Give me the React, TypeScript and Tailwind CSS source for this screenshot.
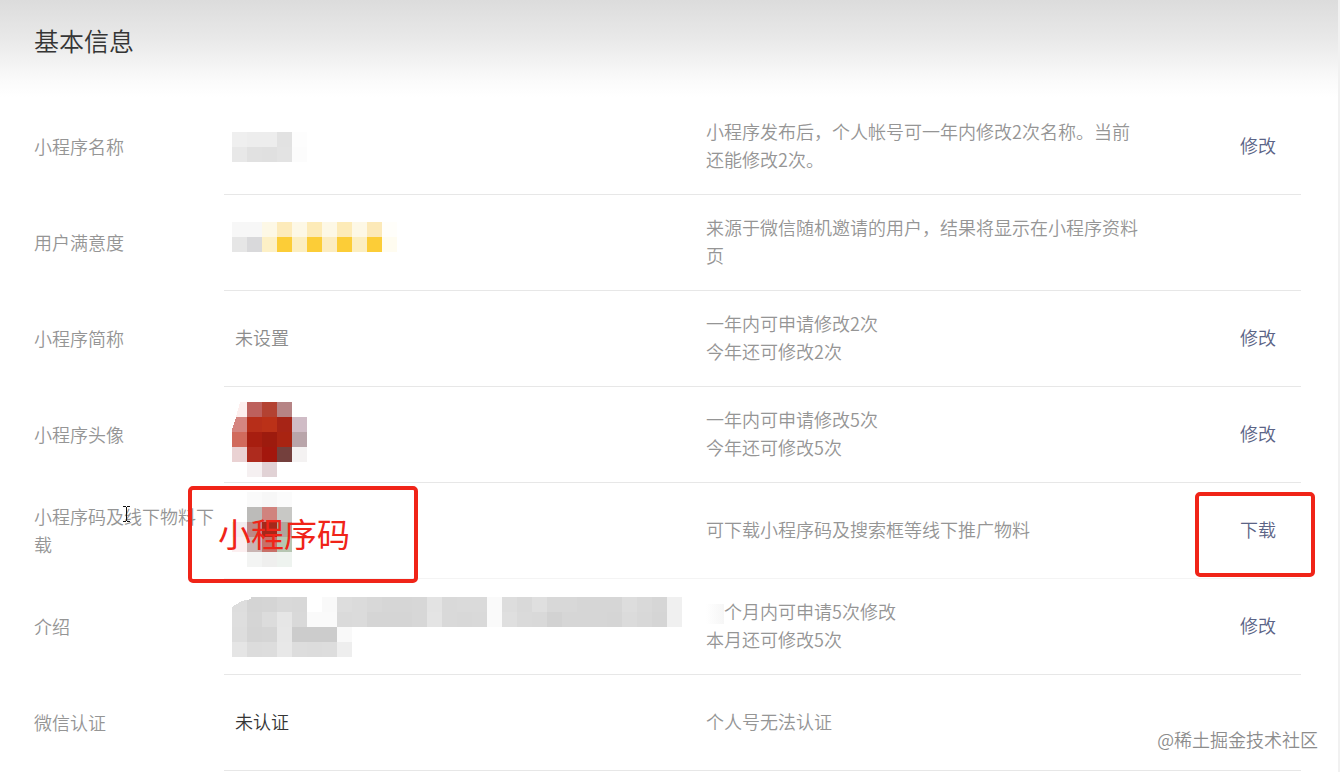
import type { ReactNode } from 'react'

const CELL = 15

type MosaicProps = {
  label: string
  width: number
  height: number
  offsetY?: number
  rows: string[]
  cut?: boolean
}

// Each row is a space-separated list of hex colours; "-" leaves the cell empty.
function Mosaic({ label, width, height, offsetY = 0, rows, cut }: MosaicProps) {
  return (
    <svg
      role="img"
      aria-label={label}
      width={width}
      height={height}
      viewBox={`0 ${-offsetY} ${width} ${height}`}
      shapeRendering="crispEdges"
      className="block"
    >
      {rows.map((row, y) =>
        row
          .split(' ')
          .map((c, x) =>
            c === '-' ? null : (
              <rect key={`${x}-${y}`} x={x * CELL} y={y * CELL} width={CELL} height={CELL} fill={`#${c}`} />
            ),
          ),
      )}
      {cut && <path d="M0 0H19V2L10 4L0 10Z" fill="#fff" />}
    </svg>
  )
}

function AvatarMosaic() {
  return (
    <svg role="img" aria-label="头像" width="75" height="84" viewBox="0 -9 75 84" className="block">
      <g shapeRendering="crispEdges">
        <path d="M8 0H15V15H4Z" fill="#fdeeed" />
        <path d="M4 15H15V30H0V28Z" fill="#d58580" />
        <path d="M0 30H15V45H0Z" fill="#d16a5c" />
        <path d="M0 45H15V60H0Z" fill="#ead2d3" />
        <path d="M15 0H30V15H15Z" fill="#bd605c" />
        <path d="M30 0H45V15H30Z" fill="#b34232" />
        <path d="M45 0H60V15H45Z" fill="#b68485" />
        <path d="M15 15H30V30H15Z" fill="#b72e19" />
        <path d="M30 15H45V30H30Z" fill="#bb3118" />
        <path d="M45 15H60V30H45Z" fill="#a72416" />
        <path d="M60 15H75V30H60Z" fill="#d0bcc6" />
        <path d="M15 30H30V45H15Z" fill="#a71e10" />
        <path d="M30 30H45V45H30Z" fill="#9d1b0e" />
        <path d="M45 30H60V45H45Z" fill="#a92412" />
        <path d="M60 30H75V45H60Z" fill="#b9a5aa" />
        <path d="M15 45H30V60H15Z" fill="#ae2b1e" />
        <path d="M30 45H45V60H30Z" fill="#a3170d" />
        <path d="M45 45H60V60H45Z" fill="#74403d" />
        <path d="M60 45H75V60H60Z" fill="#f4f2f2" />
        <path d="M15 60H30V75H15Z" fill="#f5f0f1" />
        <path d="M30 60H45V75H30Z" fill="#e1d2d5" />
      </g>
    </svg>
  )
}

function TextCursor() {
  return (
    <svg
      aria-hidden="true"
      width="7"
      height="17"
      viewBox="0 0 7 17"
      className="absolute left-[123px] top-[23px]"
      shapeRendering="crispEdges"
    >
      <path d="M0 0H3V1H4V0H7V1H4V15H7V16H4V15H3V16H0V15H3V1H0Z" fill="#111" />
    </svg>
  )
}

type Row = {
  label: string
  value: ReactNode
  description: ReactNode
  action?: string
  marked?: boolean
}

const rows: Row[] = [
  {
    label: '小程序名称',
    value: (
      <Mosaic
        label="名称"
        width={75}
        height={30}
        rows={['efefef ededed ededed e2e2e2 fdfdfd', 'e8e8e8 e1e1e1 e0e0e0 e3e3e3 fcfcfc']}
      />
    ),
    description: '小程序发布后，个人帐号可一年内修改2次名称。当前还能修改2次。',
    action: '修改',
  },
  {
    label: '用户满意度',
    value: (
      <Mosaic
        label="满意度"
        width={165}
        height={42}
        rows={[
          'f7f7f7 f7f7f7 fdf8e6 fdebbb fdf8e6 fdebb8 fdf8e6 fdebb8 fdf8e6 fce9b8 fffefa',
          'e6e6e6 d9d9db fdf0c6 fccd37 fceec0 fccd37 fcecc0 fccd37 fceec0 fccd37 fffcf0',
        ]}
      />
    ),
    description: '来源于微信随机邀请的用户，结果将显示在小程序资料页',
  },
  {
    label: '小程序简称',
    value: <span className="block pb-1 pl-[3px] text-[#8c8c8c]">未设置</span>,
    description: (
      <>
        一年内可申请修改2次
        <br />
        今年还可修改2次
      </>
    ),
    action: '修改',
  },
  {
    label: '小程序头像',
    value: <AvatarMosaic />,
    description: (
      <>
        一年内可申请修改5次
        <br />
        今年还可修改5次
      </>
    ),
    action: '修改',
  },
  {
    label: '小程序码及线下物料下载',
    value: (
      <Mosaic
        label="二维码"
        width={75}
        height={78}
        rows={[
          '- fafafa f7f7f7 fbfbfb',
          '- bcbbb9 d0837e c8c8c5',
          'f3edf0 bd8886 a5281a b0a59c',
          'fceff0 c9b5b3 c87068 b6c6b2',
          '- f3f4f3 efefee eef3ef',
        ]}
      />
    ),
    description: '可下载小程序码及搜索框等线下推广物料',
    action: '下载',
    marked: true,
  },
  {
    label: '介绍',
    value: (
      <Mosaic
        label="介绍"
        width={450}
        height={60}
        cut
        rows={[
          'dddddd d4d4d4 d5d5d5 d9d9d9 d8d8d8 - f9f9f9 dddddd dbdbdb d8d8d8 d6d6d6 d6d6d6 d7d7d7 e3e3e3 d9d9d9 dadada dadada fafafa dddddd d9d9d9 dfdfdf d8d8d8 d8d8d8 d6d6d6 d6d6d6 d6d6d6 dddddd d9d9d9 d6d6d6 f0f0f0',
          'dedede d5d5d5 dcdcdc e6e6e6 d9d9d9 fafafa fafafa dadada dbdbdb d5d5d5 d5d5d5 d5d5d5 d7d7d7 e4e4e4 d9d9d9 d8d8d8 d9d9d9 fafafa dfdfdf dadada d9d9d9 d2d2d2 d6d6d6 d6d6d6 d6d6d6 d5d5d5 dbdbdb d8d8d8 d5d5d5 f0f0f0',
          'dddddd d4d4d4 d5d5d5 e7e7e7 cccccc cccccc cccccc f9f9f9',
          'e5e5e5 dcdcdc dddddd e8e8e8 dddddd dcdcdc dddddd eeeeee',
        ]}
      />
    ),
    description: (
      <>
        <span
          aria-hidden="true"
          className="inline-block h-5 w-[18px] bg-gradient-to-r from-white to-[#f6f6f6] align-middle"
        />
        个月内可申请5次修改
        <br />
        本月还可修改5次
      </>
    ),
    action: '修改',
  },
  {
    label: '微信认证',
    value: <span className="block pb-1 pl-[3px] text-[#353535]">未认证</span>,
    description: '个人号无法认证',
  },
]

export default function App() {
  return (
    <main className="relative min-h-screen border-r-2 border-[#f1f1f1] bg-white font-['Noto_Sans_CJK_SC','Noto_Sans',sans-serif] text-[18px] leading-7 font-[350] text-[#959595]">
      <header className="h-[99px] bg-[linear-gradient(to_bottom,#dcdcdc_0%,#e9e9e9_40%,#fafafa_80%,#ffffff_98%)] px-[34px] pt-5">
        <h1 className="text-[25px] leading-10 font-[350] text-[#353535]">基本信息</h1>
      </header>

      <div className="pr-[37px]">
        <table className="w-full table-fixed border-separate border-spacing-0 text-left">
          <colgroup>
            <col className="w-[224px]" />
            <col className="w-[482px]" />
            <col />
            <col className="w-[100px]" />
          </colgroup>
          <tbody>
            {rows.map((row) => {
              const line = row.marked ? 'border-b border-[#f4f4f4]' : 'border-b border-[#e7e7e7]'
              return (
                <tr key={row.label} className="h-24">
                  <th scope="row" className="relative pt-0 pr-2 pb-0.5 pl-[34px] font-[350]">
                    {row.label}
                    {row.marked && <TextCursor />}
                  </th>
                  <td className={`relative py-0 pl-2 ${line}`}>
                    {row.value}
                    {row.marked && (
                      <div className="absolute top-[3px] -left-9 flex h-[97px] w-[230px] items-center rounded-[5px] border-4 border-[#f02418] pb-1 pl-[26px] text-[33px] text-[#f02418] font-normal">
                        小程序码
                      </div>
                    )}
                  </td>
                  <td className={`px-0 pt-0 pb-1 ${line}`}>
                    <p className="max-w-[436px]">{row.description}</p>
                  </td>
                  <td className={`relative pt-0 pr-[25px] pb-1 text-right ${line}`}>
                    {row.action && (
                      <a href="#" className="text-[#5b6486]">
                        {row.action}
                      </a>
                    )}
                    {row.marked && (
                      <div className="pointer-events-none absolute top-[9px] -right-[14px] h-[85px] w-[120px] rounded-[5px] border-4 border-[#f02418]" />
                    )}
                  </td>
                </tr>
              )
            })}
          </tbody>
        </table>
      </div>

      <p className="absolute right-5 bottom-[19px] text-[#8c8c8c] [text-shadow:0_0_2px_#ffffff]">
        @稀土掘金技术社区
      </p>
    </main>
  )
}
